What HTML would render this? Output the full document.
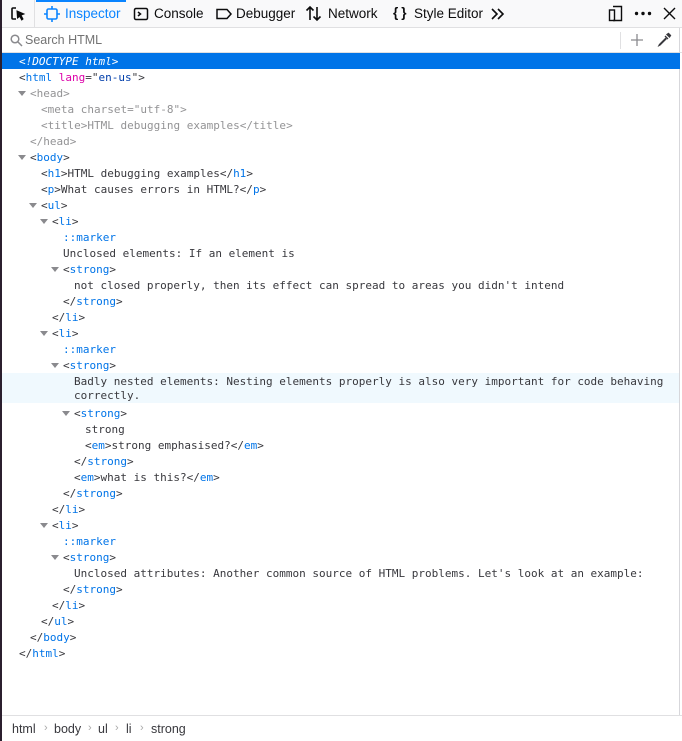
<!DOCTYPE html>
<html><head><style>
*{margin:0;padding:0;box-sizing:border-box}
body{width:682px;height:741px;overflow:hidden;background:#fff;position:relative;font-family:"Liberation Sans","DejaVu Sans",sans-serif;color:#0c0c0d}
#lb{position:absolute;left:0;top:0;width:2px;height:741px;background:#2b1f2e}
#rb{position:absolute;left:679px;top:28px;width:1px;height:687px;background:#d7d7db}
#tb{position:absolute;left:2px;top:0;width:680px;height:28px;background:#f9f9fa;border-bottom:1px solid #e0e0e2;font-family:"Liberation Sans",sans-serif;font-size:13.5px;color:#0c0c0d}
.t{position:absolute;top:6px;white-space:nowrap}
#sb{position:absolute;left:2px;top:28px;width:680px;height:25px;border-bottom:1px solid #e0e0e2;background:#fff}
.r{position:absolute;height:16px;line-height:17px;font-family:"DejaVu Sans Mono",monospace;font-size:11px;white-space:pre;color:#38383d}
.n{color:#0074e8}.an{color:#dd00a9}.av{color:#003eaa}
.g,.g .n,.g .an,.g .av{color:#939395}
.tw{position:absolute;width:0;height:0;border-left:4px solid transparent;border-right:4px solid transparent;border-top:5px solid #8a8a8e}
#bc{position:absolute;left:2px;top:715px;width:680px;height:26px;border-top:1px solid #e0e0e2;font-size:12.5px;font-family:"Liberation Sans",sans-serif;color:#38383d}
#bc span{position:absolute;top:6px}
#bc .s{color:#aaa;font-size:11px;top:6px}
</style></head><body>
<div id="lb"></div>
<div id="tb">
<div style="position:absolute;left:32px;top:0;width:1px;height:27px;background:#e0e0e2"></div>
<svg style="position:absolute;left:8px;top:6px" width="16" height="16" viewBox="0 0 16 16" fill="none" stroke="#0c0c0d" stroke-width="1.6"><path d="M6 2H3a1 1 0 0 0-1 1v9a1 1 0 0 0 1 1h3"/><path d="M7 5l7 3-3 1.2L13 13l-1.3 1-2-3.7L7.5 12z" fill="#0c0c0d" stroke-width="1"/></svg>
<div style="position:absolute;left:34px;top:0;width:90px;height:2px;background:#0a84ff"></div>
<svg style="position:absolute;left:42px;top:6px" width="16" height="16" viewBox="0 0 16 16" fill="none" stroke="#0a84ff" stroke-width="1.6"><rect x="3" y="3" width="10" height="10" rx="1.5"/><path d="M8 0v3M8 13v3M0 8h3M13 8h3"/></svg>
<span class="t" style="left:63px;color:#0a84ff">Inspector</span>
<svg style="position:absolute;left:131px;top:6px" width="16" height="16" viewBox="0 0 16 16" fill="none" stroke="#0c0c0d" stroke-width="1.5"><rect x="1.5" y="2.5" width="13" height="11" rx="1.5"/><path d="M5 6l2.5 2L5 10"/></svg>
<span class="t" style="left:152px">Console</span>
<svg style="position:absolute;left:213px;top:6px" width="18" height="16" viewBox="0 0 18 16" fill="none" stroke="#0c0c0d" stroke-width="1.5"><path d="M2 3.5h10l4 4.5-4 4.5H2z"/></svg>
<span class="t" style="left:234px">Debugger</span>
<svg style="position:absolute;left:303px;top:5px" width="18" height="17" viewBox="0 0 18 17" fill="none" stroke="#0c0c0d" stroke-width="1.6"><path d="M5 15V2M1.5 5.5L5 2l3.5 3.5M12 2v13M8.5 11.5L12 15l3.5-3.5"/></svg>
<span class="t" style="left:326px">Network</span>
<span class="t" style="left:391px;font-weight:bold;letter-spacing:3px;top:5px">{}</span>
<span class="t" style="left:412px">Style Editor</span>
<svg style="position:absolute;left:489px;top:8px" width="14" height="12" viewBox="0 0 14 12" fill="none" stroke="#0c0c0d" stroke-width="1.6"><path d="M1 1l5 5-5 5M7 1l5 5-5 5"/></svg>
<svg style="position:absolute;left:606px;top:5px" width="16" height="17" viewBox="0 0 16 17" fill="none" stroke="#0c0c0d" stroke-width="1.4"><path d="M5 1.5h8.5v14H5"/><rect x="1.5" y="5" width="5" height="10.5"/></svg>
<svg style="position:absolute;left:632px;top:11px" width="18" height="5" viewBox="0 0 18 5" fill="#0c0c0d"><circle cx="2.5" cy="2.5" r="1.7"/><circle cx="9" cy="2.5" r="1.7"/><circle cx="15.5" cy="2.5" r="1.7"/></svg>
<svg style="position:absolute;left:661px;top:7px" width="13" height="13" viewBox="0 0 13 13" stroke="#0c0c0d" stroke-width="1.4"><path d="M1 1l11 11M12 1L1 12"/></svg>
</div>
<div id="sb">
<svg style="position:absolute;left:8px;top:6px" width="13" height="13" viewBox="0 0 13 13" fill="none" stroke="#8a8a8e" stroke-width="1.5"><circle cx="5" cy="5" r="3.8"/><path d="M8 8l4 4"/></svg>
<span style="position:absolute;left:23px;top:5px;font-size:12.5px;color:#737373;font-family:'Liberation Sans',sans-serif">Search HTML</span>
<div style="position:absolute;left:618px;top:4px;width:1px;height:17px;background:#e0e0e2"></div>
<svg style="position:absolute;left:628px;top:5px" width="14" height="14" viewBox="0 0 14 14" stroke="#8a8a8e" stroke-width="1.3"><path d="M7 1v12M1 7h12"/></svg>
<svg style="position:absolute;left:655px;top:4px" width="15" height="15" viewBox="0 0 15 15" fill="none" stroke="#38383d" stroke-width="1.3"><path d="M9 6L2.5 12.5 2 13.5l1 -.5L9.5 6.5"/><path d="M8 4l3 3M10 2.5l2.5 2.5 1-1.5-2-2z" fill="#38383d"/></svg>
</div>
<div id="rb"></div>
<div style="position:absolute;left:2px;top:53px;width:678px;height:16px;background:#0074e8"></div>
<div style="position:absolute;left:2px;top:373px;width:677px;height:30px;background:#f0f9fe"></div>
<div class="r" style="left:19px;top:53px;color:#fff;font-style:italic">&lt;!DOCTYPE html&gt;</div>
<div class="r" style="left:19px;top:69px">&lt;<span class="n">html</span> <span class="an">lang</span>="<span class="av">en-us</span>"&gt;</div>
<div class="tw" style="left:18px;top:91px"></div>
<div class="r g" style="left:30px;top:85px">&lt;<span class="n">head</span>&gt;</div>
<div class="r g" style="left:41px;top:101px">&lt;<span class="n">meta</span> <span class="an">charset</span>="<span class="av">utf-8</span>"&gt;</div>
<div class="r g" style="left:41px;top:117px">&lt;<span class="n">title</span>&gt;HTML debugging examples&lt;/<span class="n">title</span>&gt;</div>
<div class="r g" style="left:30px;top:133px">&lt;/<span class="n">head</span>&gt;</div>
<div class="tw" style="left:18px;top:155px"></div>
<div class="r" style="left:30px;top:149px">&lt;<span class="n">body</span>&gt;</div>
<div class="r" style="left:41px;top:165px">&lt;<span class="n">h1</span>&gt;HTML debugging examples&lt;/<span class="n">h1</span>&gt;</div>
<div class="r" style="left:41px;top:181px">&lt;<span class="n">p</span>&gt;What causes errors in HTML?&lt;/<span class="n">p</span>&gt;</div>
<div class="tw" style="left:29px;top:203px"></div>
<div class="r" style="left:41px;top:197px">&lt;<span class="n">ul</span>&gt;</div>
<div class="tw" style="left:40px;top:219px"></div>
<div class="r" style="left:52px;top:213px">&lt;<span class="n">li</span>&gt;</div>
<div class="r n" style="left:63px;top:229px">::marker</div>
<div class="r" style="left:63px;top:245px">Unclosed elements: If an element is</div>
<div class="tw" style="left:51px;top:267px"></div>
<div class="r" style="left:63px;top:261px">&lt;<span class="n">strong</span>&gt;</div>
<div class="r" style="left:74px;top:277px">not closed properly, then its effect can spread to areas you didn't intend</div>
<div class="r" style="left:63px;top:293px">&lt;/<span class="n">strong</span>&gt;</div>
<div class="r" style="left:52px;top:309px">&lt;/<span class="n">li</span>&gt;</div>
<div class="tw" style="left:40px;top:331px"></div>
<div class="r" style="left:52px;top:325px">&lt;<span class="n">li</span>&gt;</div>
<div class="r n" style="left:63px;top:341px">::marker</div>
<div class="tw" style="left:51px;top:363px"></div>
<div class="r" style="left:63px;top:357px">&lt;<span class="n">strong</span>&gt;</div>
<div class="r" style="left:74px;top:373px">Badly nested elements: Nesting elements properly is also very important for code behaving</div>
<div class="r" style="left:74px;top:387px">correctly.</div>
<div class="tw" style="left:62px;top:411px"></div>
<div class="r" style="left:74px;top:405px">&lt;<span class="n">strong</span>&gt;</div>
<div class="r" style="left:85px;top:421px">strong</div>
<div class="r" style="left:85px;top:437px">&lt;<span class="n">em</span>&gt;strong emphasised?&lt;/<span class="n">em</span>&gt;</div>
<div class="r" style="left:74px;top:453px">&lt;/<span class="n">strong</span>&gt;</div>
<div class="r" style="left:74px;top:469px">&lt;<span class="n">em</span>&gt;what is this?&lt;/<span class="n">em</span>&gt;</div>
<div class="r" style="left:63px;top:485px">&lt;/<span class="n">strong</span>&gt;</div>
<div class="r" style="left:52px;top:501px">&lt;/<span class="n">li</span>&gt;</div>
<div class="tw" style="left:40px;top:523px"></div>
<div class="r" style="left:52px;top:517px">&lt;<span class="n">li</span>&gt;</div>
<div class="r n" style="left:63px;top:533px">::marker</div>
<div class="tw" style="left:51px;top:555px"></div>
<div class="r" style="left:63px;top:549px">&lt;<span class="n">strong</span>&gt;</div>
<div class="r" style="left:74px;top:565px">Unclosed attributes: Another common source of HTML problems. Let's look at an example:</div>
<div class="r" style="left:63px;top:581px">&lt;/<span class="n">strong</span>&gt;</div>
<div class="r" style="left:52px;top:597px">&lt;/<span class="n">li</span>&gt;</div>
<div class="r" style="left:41px;top:613px">&lt;/<span class="n">ul</span>&gt;</div>
<div class="r" style="left:30px;top:629px">&lt;/<span class="n">body</span>&gt;</div>
<div class="r" style="left:19px;top:645px">&lt;/<span class="n">html</span>&gt;</div>
<div id="bc">
<span style="left:10px">html</span><span class="s" style="left:42px">›</span>
<span style="left:52px">body</span><span class="s" style="left:86px">›</span>
<span style="left:96px">ul</span><span class="s" style="left:113px">›</span>
<span style="left:124px">li</span><span class="s" style="left:138px">›</span>
<span style="left:149px">strong</span>
</div>
</body></html>
